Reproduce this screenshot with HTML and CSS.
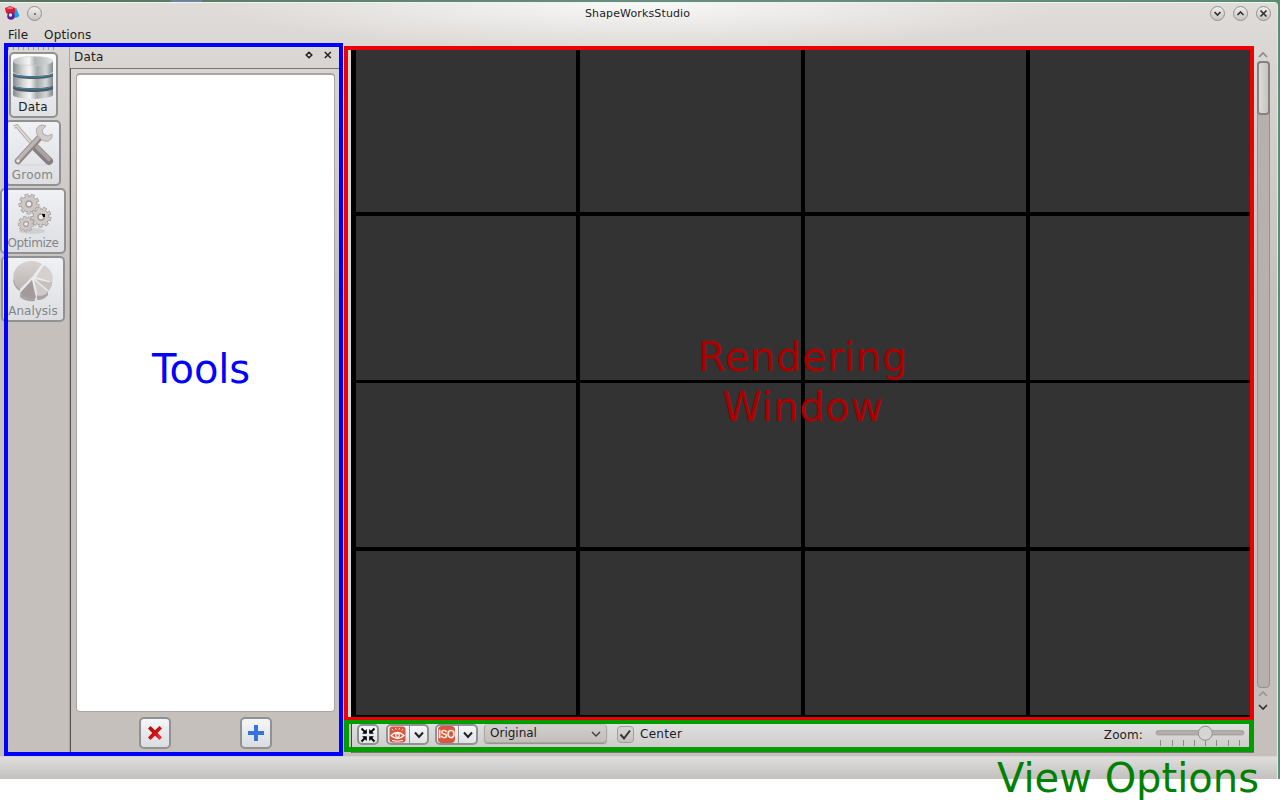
FILE: index.html
```html
<!DOCTYPE html>
<html lang="en">
<head>
<meta charset="utf-8">
<title>ShapeWorksStudio</title>
<link rel="stylesheet" href="styles.css">
</head>
<body>
<svg class="defs" width="0" height="0">
  <defs>
    <linearGradient id="steel"><stop offset="0" stop-color="#858a8a"/><stop offset=".25" stop-color="#d4d6d6"/><stop offset=".42" stop-color="#f4f4f4"/><stop offset=".6" stop-color="#a5aaaa"/><stop offset=".82" stop-color="#d5d7d7"/><stop offset="1" stop-color="#858b8b"/></linearGradient>
    <linearGradient id="lid"><stop offset="0" stop-color="#b9bcbc"/><stop offset=".4" stop-color="#f5f5f5"/><stop offset=".55" stop-color="#b0b3b3"/><stop offset="1" stop-color="#e2e3e3"/></linearGradient>
    <linearGradient id="pie" x2="0" y2="1"><stop offset="0" stop-color="#d8d3d1"/><stop offset="1" stop-color="#bbb5b3"/></linearGradient>
    <linearGradient id="redx" x2="1" y2="1"><stop offset="0" stop-color="#b80c0c"/><stop offset=".5" stop-color="#c91313"/><stop offset="1" stop-color="#fb4040"/></linearGradient>
    <g id="gear"><circle r="8" fill="none" stroke="#a39c9a" stroke-width="5" stroke-dasharray="3.4 2.190"/><circle r="8" fill="#cec8c6" stroke="#a39c9a"/><circle r="8" fill="none" stroke="#cec8c6" stroke-width="3.600" stroke-dasharray="2.400 3.190" stroke-dashoffset="-.5"/><circle r="3" fill="#eceef1" stroke="#a29b99" stroke-width="1.400"/></g>
  </defs>
</svg>
<div class="desktop">
  <div class="taskpeek"></div>
  <div class="window">
    <header class="titlebar">
      <svg class="appicon" width="15" height="15" viewBox="0 0 15 15"><path d="M11 1.500L14.500 10l-3.500 2-3-1z" fill="#13a5e8"/><path d="M11 1.500L8 11V6z" fill="#0a5e9e"/><path d="M0 2l5-2 5 2v5L5 9 1 7z" fill="#d51f36"/><path d="M1 2l4-1 4 1-4 1.300z" fill="#ff8290"/><circle cx="6" cy="10" r="3.800" fill="#5a2494"/><circle cx="5.500" cy="9" r="1.700" fill="#f0e0ff"/></svg>
      <span class="knob"><i class="dot"></i></span>
      <h1 class="title">ShapeWorksStudio</h1>
      <div class="controls">
        <span class="knob"><svg width="9" height="9"><path d="M1.500 3l3 3 3-3"/></svg></span>
        <span class="knob"><svg width="9" height="9"><path d="M1.500 6l3-3 3 3"/></svg></span>
        <span class="knob"><svg width="9" height="9"><path d="M1.500 1.500l6 6m0-6l-6 6"/></svg></span>
      </div>
    </header>
    <nav class="menubar"><span>File</span><span class="menu-options">Options</span></nav>
    <main class="content">
      <aside class="toolbar">
        <div class="grip"></div>
        <button class="tool tool-data">
          <svg width="42" height="44" viewBox="0 0 42 44"><path d="M1 34v5c2 5 38 5 40 0v-6z" fill="url(#steel)"/><path d="M1 29c4 4 36 4 40 0v4c-4 4-36 4-40 0z" fill="#4b5b64"/><path d="M1 19v10c4 4 36 4 40 0V19z" fill="url(#steel)"/><path d="M1 17c4 4 36 4 40 0v3c-4 4-36 4-40 0z" fill="#4b5b64"/><path d="M1 18c5 4 35 4 40 0" fill="none" stroke="#4588b0"/><path d="M1 30c5 4 35 4 40 0" fill="none" stroke="#4588b0"/><path d="M1 5v11c4 5 36 5 40 0V5z" fill="url(#steel)"/><ellipse cx="21" cy="5" rx="20" ry="4.500" fill="url(#lid)" stroke="#c9cccc" stroke-width=".6"/></svg>
          <span>Data</span>
        </button>
        <button class="tool tool-groom off">
          <svg width="42" height="44" viewBox="0 0 42 44"><path d="M6 41h29" stroke="#dcdce0" stroke-width="2"/><path d="M2 3l3-1 4 5 14 16" fill="none" stroke="#b3adab" stroke-width="3.600"/><path d="M2 3l3-1 4 5 14 16" fill="none" stroke="#dedbd9" stroke-width="1.800"/><path d="M24 24l13 13" stroke="#85807e" stroke-width="8" stroke-linecap="round"/><path d="M24 22l13 13" stroke="#aaa3a1" stroke-width="4" stroke-linecap="round"/><path d="M6 37L29 12" stroke="#8e8785" stroke-width="6.500" stroke-linecap="round"/><path d="M6 36L29 11" stroke="#bdb6b4" stroke-width="3.600" stroke-linecap="round"/><path d="M30 1c-6 1-7 6-4 11l4 4c6 3 11 0 10-6l-4 2-5-2-1-4 4-4z" fill="#d2cdcb" stroke="#b0a9a7"/><circle cx="6" cy="37" r="1.600" fill="#eee"/></svg>
          <span>Groom</span>
        </button>
        <button class="tool tool-optimize off">
          <svg width="42" height="44" viewBox="0 0 42 44"><ellipse cx="20" cy="39" rx="13" ry="3" fill="#cfced0"/><use href="#gear" x="17" y="12"/><use href="#gear" transform="translate(14 32) scale(.78)"/><use href="#gear" x="29" y="25"/><path d="M30 22h3v3h-2z" fill="#000"/></svg>
          <span>Optimize</span>
        </button>
        <button class="tool tool-analysis off">
          <svg width="42" height="44" viewBox="0 0 42 44"><path d="M8 34v3c4 4 10 5 15 4v-4zM25 35v5c5 0 9-2 11-5v-4zM1 19c0 5 3 10 7 12v-4zM40 19c0 6-1 9-4 12v-4z" fill="#aaa3a1"/><path d="M20 17L8 29C-1 23-1 10 9 4c6-4 15-4 21 0z" fill="url(#pie)"/><path d="M24 17l8-12c8 5 10 11 8 17z" fill="#d6d1cf"/><path d="M23 19l17 4c0 4-2 6-4 7z" fill="#c6c0be"/><path d="M20 20l4 18c-6 1-12-1-16-5z" fill="#a29b99"/><path d="M22 20l14 12c-3 3-6 4-10 4z" fill="#cfc9c7"/></svg>
          <span>Analysis</span>
        </button>
      </aside>
      <section class="dock">
        <header class="dock-title"><span class="dock-name">Data</span><svg class="dock-buttons" width="30" height="12"><path d="M6 3.200L8.800 6 6 8.800 3.200 6z"/><path d="M21.800 3l6 6m0-6l-6 6"/></svg></header>
        <div class="dock-body">
          <div class="list"></div>
          <div class="actions">
            <button class="action"><svg width="16" height="16"><path d="M1 3.500L3.500 1 8 5.200 12.500 1 15 3.500 10.700 8 15 12.500 12.500 15 8 10.700 3.500 15 1 12.500 5.200 8z" fill="url(#redx)"/></svg></button>
            <button class="action"><svg width="16" height="16"><path d="M6 0h4v6h6v4h-6v6H6v-6H0V6h6z" fill="#3574df"/></svg></button>
          </div>
        </div>
      </section>
      <section class="viewer">
        <div class="render-row">
          <div class="grid">
            <i></i><i></i><i></i><i></i><i></i><i></i><i></i><i></i><i></i><i></i><i></i><i></i><i></i><i></i><i></i><i></i>
          </div>
          <div class="scrollbar">
            <svg width="12" height="12"><path d="M2 8l4-4 4 4" stroke="#8d8987"/></svg>
            <div class="track"><div class="thumb"></div></div>
            <svg width="12" height="12"><path d="M2 8l4-4 4 4" stroke="#9a9694"/></svg>
            <svg width="12" height="15"><path d="M2 5l4 4 4-4" stroke="#333"/></svg>
          </div>
        </div>
        <div class="viewbar">
          <button class="vb"><svg width="16" height="16"><path d="M1.500 1.500l4 4M14.500 1.500l-4 4M1.500 14.500l4-4M14.500 14.500l-4-4" stroke="#000" stroke-width="1.800"/><path d="M6.800 2v4.800H2zM9.200 2v4.800H14zM6.800 14V9.200H2zM9.200 14V9.200H14z"/></svg></button>
          <button class="vb split eye"><svg width="17" height="17"><rect x=".5" y=".5" width="16" height="16" rx="3" fill="#d9573f"/><path d="M2 9.500q6.500-6 13 0-6.500 6-13 0z" fill="none" stroke="#fff" stroke-width="1.300"/><circle cx="8.500" cy="9.500" r="1.800" fill="none" stroke="#fff" stroke-width="1.200"/><path d="M3 3l1 1.500M6.500 2l.5 1.500M10.500 2l-.5 1.500M14 3l-1 1.500M3 14.500q5.500 1.500 11 0" stroke="#fff" fill="none"/></svg><svg class="drop" width="18" height="17"><path d="M5 6.500l4 4.500 4-4.500"/></svg></button>
          <button class="vb split iso"><span class="isobadge">ISO</span><svg class="drop" width="18" height="17"><path d="M5 6.500l4 4.500 4-4.500"/></svg></button>
          <div class="select"><span>Original</span><svg width="10" height="8"><path d="M1 2l4 4 4-4"/></svg></div>
          <div class="check"><svg width="17" height="17"><path d="M3.500 8.500l3.500 4 6-8"/></svg></div>
          <span class="center">Center</span>
          <span class="zoom">Zoom:</span>
          <svg class="slider" width="90" height="24"><rect x="1" y="6.500" width="88" height="4.500" rx="2.200" fill="#b4aeab" stroke="#9b9694" stroke-width=".7"/><path d="M5.500 16v6M17.500 16v6M28.500 16v6M39.500 16v6M50.500 16v6M61.500 16v6M73.500 16v6M84.500 16v6" stroke="#8d8a89"/><circle cx="50.300" cy="9.200" r="7" fill="#d6d5d4" stroke="#918e8c"/></svg>
        </div>
      </section>
    </main>
    <footer class="statusbar"></footer>
  </div>
  <div class="callout callout-tools"></div><div class="callout callout-render"></div><div class="callout callout-view"></div>
  <div class="note note-tools">Tools</div>
  <div class="note note-render">Rendering<br>Window</div>
  <div class="note note-view">View Options</div>
</div>
</body>
</html>
```
FILE: styles.css
```css
* { box-sizing: border-box; }
body { margin: 0; width: 1280px; height: 800px; overflow: hidden; background: #fff; font: 12.5px "DejaVu Sans", sans-serif; color: #1c1c1c; }
.defs { display: block; position: absolute; }
svg { display: block; flex: none; }
button { font: inherit; color: inherit; }
.desktop { position: relative; height: 779px; padding: 2px 2px 0 0; background: linear-gradient(90deg, #55735f, #688f80 50%, #5b8c75); }
.taskpeek { position: absolute; left: 171px; top: 0; width: 31px; height: 2px; background: #7181a0; }
.window { height: 777px; display: flex; flex-direction: column; background: radial-gradient(ellipse 420px 48px at 640px 0, #f8f8f8, rgba(222,218,215,0)), linear-gradient(#dfdcd9, #d9d5d2 60px, #c6c0bc 300px); border-top: 1px solid #eef4ef; border-right: 1px solid #e9e7e5; border-radius: 0 4px 0 0; }
.titlebar { height: 21px; display: flex; align-items: center; padding: 0 6px 0 5px; }
.knob { width: 15px; height: 15px; border-radius: 50%; border: 1px solid #92908e; background: linear-gradient(#f0efee, #c7c4c2); display: flex; align-items: center; justify-content: center; }
.titlebar .appicon + .knob { margin-left: 7px; }
.knob svg { fill: none; stroke: #333; stroke-width: 1.700; }
.dot { width: 2px; height: 2px; background: #777; }
.title { flex: 1; margin: 0 0 0 -14px; padding-left: 557px; font-size: 11px; font-weight: 400; letter-spacing: .13px; }
.controls { display: flex; gap: 8px; }
.menubar { height: 22px; padding: 3px 0 0 8px; display: flex; gap: 16px; font-size: 12px; line-height: 17px; }
.menu-options { letter-spacing: .15px; }
.content { height: 710px; display: flex; }
.toolbar { width: 66px; display: flex; flex-direction: column; align-items: center; flex: none; gap: 2px; }
.grip { width: 50px; height: 3px; margin-top: 1px; background: repeating-linear-gradient(90deg, #a09c99 0 1px, transparent 1px 5px); }
.tool { height: 66px; padding: 0; border: 2px solid #8f9193; border-radius: 5px; background: linear-gradient(#fafbfd, #dfe1e5); display: flex; flex-direction: column; align-items: center; flex: none; line-height: 15px; font-size: 12px; letter-spacing: .2px; }
.tool svg { margin-top: 2px; }
.off { color: #858585; background: linear-gradient(#eff1f5, #dcdee2); }
.tool-data { width: 49px; }
.tool-groom { width: 56px; margin-left: -1px; }
.tool-optimize { width: 66px; letter-spacing: -.35px; }
.tool-analysis { width: 64px; letter-spacing: 0; }
.dock { width: 272px; margin-left: 3px; display: flex; flex-direction: column; border-left: 1px solid #aaa5a2; flex: none; }
.dock-title { height: 22px; display: flex; align-items: center; justify-content: space-between; padding: 0 8px 0 4px; font-size: 12px; }
.dock-name { letter-spacing: .2px; padding-bottom: 1px; }
.dock-buttons { margin-bottom: 4px; fill: none; stroke: #222; stroke-width: 1.500; }
.dock-body { flex: 1; border-top: 1px solid #777; border-left: 1px solid #555; padding: 4px 3px 0 5px; }
.list { width: 259px; height: 639px; background: #fff; border: 1px solid #aaa5a2; border-top-width: 2px; border-radius: 4px; }
.actions { display: flex; gap: 69px; padding: 5px 0 0 63px; }
.action { width: 32px; height: 32px; padding: 0; border: 2px solid #8f9193; border-radius: 5px; background: linear-gradient(#f5f6fa, #dadce0); display: flex; align-items: center; justify-content: center; }
.viewer { width: 928px; margin-left: 7px; display: flex; flex-direction: column; flex: none; }
.render-row { display: flex; height: 674px; }
.grid { width: 906px; border-top: 1px solid #666; border-left: 3px solid #d7d4d1; background: #000; padding: 3px 3px 0 5px; display: grid; grid-template-columns: 220px 221px 221px 221px; grid-template-rows: 162px 164px 164px 164px; gap: 4px; row-gap: 3.600px; align-content: start; }
.grid i { background: #333; }
.scrollbar { width: 14px; margin-left: 2px; padding-top: 3px; display: flex; flex-direction: column; align-items: center; }
.scrollbar svg { fill: none; stroke-width: 1.700; }
.track { width: 13px; height: 627px; border: 1px solid #96918f; border-radius: 4px; background: #b7b0ad; }
.thumb { width: 13px; height: 54px; margin: -1px; border: 2px solid #858280; border-radius: 4px; background: linear-gradient(90deg, #dedcda, #c7c4c2); }
.viewbar { width: 903px; height: 33px; margin: 0 0 0 3px; padding: 4px 9px 0 5px; border-left: 1px solid #444; border-bottom: 1px solid #777; display: flex; align-items: flex-start; background: linear-gradient(#e2e2e2, #cbc9c8); font-size: 12px; }
.vb { width: 22px; height: 21px; padding: 0; border: 2px solid #8f9193; border-radius: 5px; background: linear-gradient(#f6f7f9, #dfe1e5); display: flex; align-items: center; justify-content: center; flex: none; }
.split { width: 43px; justify-content: flex-start; padding-left: 1px; }
.eye { margin-left: 7px; }
.iso { margin-left: 6px; }
.drop { border-left: 1px solid #8f9193; margin-left: 3px; fill: none; stroke: #222; stroke-width: 2; }
.isobadge { width: 17px; height: 17px; border-radius: 4px; background: #d9573f; color: #fff; font: 10px/17px "Liberation Sans", sans-serif; text-align: center; letter-spacing: -.3px; flex: none; -webkit-text-stroke: .3px #fff; }
.select { width: 123px; height: 19px; margin-left: 6px; padding: 0 5px 1px 5px; border-radius: 4px; border: 1px solid #aba7a5; border-top-color: #c5c2c0; background: linear-gradient(#d1cfcd, #c2bebc); box-shadow: 0 1px 1px #918e8c; display: flex; align-items: center; justify-content: space-between; }
.select svg { fill: none; stroke: #444; stroke-width: 1.500; margin-top: 1px; }
.check { width: 17px; height: 17px; margin: 2px 0 0 10px; border: 1px solid #a19d9b; border-radius: 4px; background: linear-gradient(#d8d6d5, #c5c1bf); display: flex; align-items: center; justify-content: center; }
.check svg { fill: none; stroke: #333; stroke-width: 2; }
.center { margin: 3px 0 0 6px; letter-spacing: .3px; }
.zoom { margin: 4px 0 0 auto; letter-spacing: .1px; }
.slider { margin: 0 0 0 12px; }
.statusbar { flex: 1; border-top: 1px solid #d5d3d1; background: linear-gradient(#dedede, #c3c0be); }
.callout { position: absolute; }
.callout-tools { left: 4px; top: 43px; width: 339px; height: 713px; border: 4px solid #0000fe; }
.callout-render { left: 344px; top: 46px; width: 910px; height: 674px; border: 4px solid #ef0000; border-bottom-width: 3px; }
.callout-view { left: 344px; top: 720px; width: 910px; height: 32px; border: 5px solid #009c00; border-top-width: 4px; }
.note { position: absolute; font-size: 40px; line-height: 50px; white-space: nowrap; text-align: center; }
.note-tools { left: 152px; top: 344px; color: #00f; letter-spacing: -.1px; }
.note-render { left: 698px; top: 332px; color: #a00; letter-spacing: .65px; }
.note-view { left: 997px; top: 753px; color: #008000; }
```
